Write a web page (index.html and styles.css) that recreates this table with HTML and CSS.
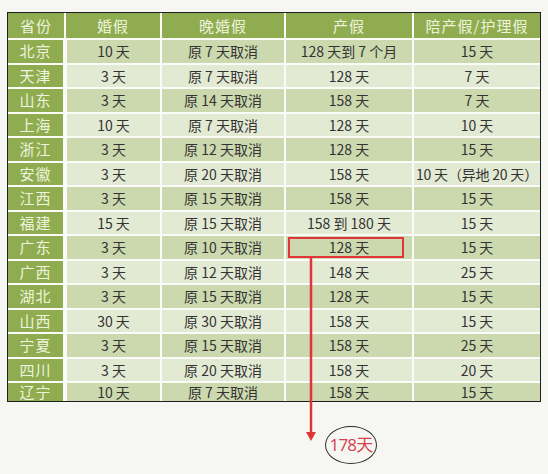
FILE: index.html
```html
<!DOCTYPE html>
<html lang="zh">
<head>
<meta charset="utf-8">
<link rel="stylesheet" href="styles.css">
</head>
<body>
<div class="page">
  <div class="sheet">
    <table class="leave">
      <colgroup>
        <col class="c1"><col class="c2"><col class="c3"><col class="c4"><col class="c5">
      </colgroup>
      <thead>
        <tr><th>省份</th><th>婚假</th><th>晚婚假</th><th>产假</th><th>陪产假/护理假</th></tr>
      </thead>
      <tbody>
        <tr class="dk"><th>北京</th><td>10 天</td><td>原 7 天取消</td><td>128 天到 7 个月</td><td>15 天</td></tr>
        <tr class="lt"><th>天津</th><td>3 天</td><td>原 7 天取消</td><td>128 天</td><td>7 天</td></tr>
        <tr class="dk"><th>山东</th><td>3 天</td><td>原 14 天取消</td><td>158 天</td><td>7 天</td></tr>
        <tr class="lt"><th>上海</th><td>10 天</td><td>原 7 天取消</td><td>128 天</td><td>10 天</td></tr>
        <tr class="dk"><th>浙江</th><td>3 天</td><td>原 12 天取消</td><td>128 天</td><td>15 天</td></tr>
        <tr class="lt"><th>安徽</th><td>3 天</td><td>原 20 天取消</td><td>158 天</td><td class="tight">10 天（异地 20 天）</td></tr>
        <tr class="dk"><th>江西</th><td>3 天</td><td>原 15 天取消</td><td>158 天</td><td>15 天</td></tr>
        <tr class="lt"><th>福建</th><td>15 天</td><td>原 15 天取消</td><td>158 到 180 天</td><td>15 天</td></tr>
        <tr class="dk"><th>广东</th><td>3 天</td><td>原 10 天取消</td><td>128 天</td><td>15 天</td></tr>
        <tr class="lt"><th>广西</th><td>3 天</td><td>原 12 天取消</td><td>148 天</td><td>25 天</td></tr>
        <tr class="dk"><th>湖北</th><td>3 天</td><td>原 15 天取消</td><td>128 天</td><td>15 天</td></tr>
        <tr class="lt"><th>山西</th><td>30 天</td><td>原 30 天取消</td><td>158 天</td><td>15 天</td></tr>
        <tr class="dk"><th>宁夏</th><td>3 天</td><td>原 15 天取消</td><td>158 天</td><td>25 天</td></tr>
        <tr class="lt"><th>四川</th><td>3 天</td><td>原 20 天取消</td><td>158 天</td><td>20 天</td></tr>
        <tr class="dk last"><th>辽宁</th><td>10 天</td><td>原 7 天取消</td><td>158 天</td><td>15 天</td></tr>
      </tbody>
    </table>
  </div>
  <div class="mark-box"></div>
  <svg class="arrow" width="14" height="186" viewBox="0 0 14 186">
    <line x1="7" y1="0" x2="7" y2="176" stroke="#e2353a" stroke-width="2.5"/>
    <polygon points="2,174 12,174 7,183" fill="#e2353a"/>
  </svg>
  <div class="bubble">178天</div>
</div>
</body>
</html>
```

FILE: styles.css
```css
html, body {
  margin: 0;
  padding: 0;
  background: #f6f7f2;
}
.page {
  position: relative;
  width: 548px;
  height: 474px;
  padding-top: 12px;
  padding-left: 7px;
  box-sizing: border-box;
  font-family: "Noto Sans CJK SC", "Noto Sans", sans-serif;
}
.sheet {
  width: 534px;
  height: 390px;
  box-sizing: border-box;
  border: 1px solid #1e1e1e;
  background: #ffffff;
  overflow: hidden;
}
.leave {
  border-collapse: collapse;
  table-layout: fixed;
  width: 532px;
  font-size: 14px;
  color: #333;
}
.c1 { width: 57px; }
.c2 { width: 96px; }
.c3 { width: 124px; }
.c4 { width: 128px; }
.c5 { width: 127px; }
.leave th, .leave td {
  padding: 0;
  text-align: center;
  white-space: nowrap;
  font-weight: normal;
  line-height: 20px;
  border-bottom: 2px solid #fbfcf7;
  border-right: 2px solid #fbfcf7;
}
.leave tr > :last-child { border-right: none; }
.leave thead tr { height: 26px; }
.leave thead th {
  background: #8fad50;
  color: #eef3dc;
  font-size: 15px;
  letter-spacing: 1px;
}
.leave tbody th {
  background: #8fad50;
  color: #eef3dc;
  font-size: 15px;
  letter-spacing: 1px;
  border-right-width: 4px;
}
.leave tbody tr { height: 24.5px; }
.leave tbody tr.dk td { background: #ccd9ae; }
.leave tbody tr.lt td { background: #e3ead3; }
.leave tbody tr.last { height: 19px; }
.leave tbody tr.last th, .leave tbody tr.last td {
  border-bottom: none;
  line-height: 16px;
}
.leave td.tight { letter-spacing: -0.2px; }
.mark-box {
  position: absolute;
  left: 288px;
  top: 237px;
  width: 116px;
  height: 21px;
  box-sizing: border-box;
  border: 2px solid #e2353a;
}
.arrow {
  position: absolute;
  left: 304px;
  top: 258px;
}
.bubble {
  position: absolute;
  left: 325px;
  top: 426px;
  width: 52px;
  height: 38px;
  box-sizing: border-box;
  border: 1px solid #2a2a2a;
  border-radius: 50%;
  color: #d8404c;
  font-family: "Open Sans", "Noto Sans CJK SC", sans-serif;
  font-size: 17px;
  line-height: 36px;
  text-align: center;
  letter-spacing: -0.8px;
}
```
